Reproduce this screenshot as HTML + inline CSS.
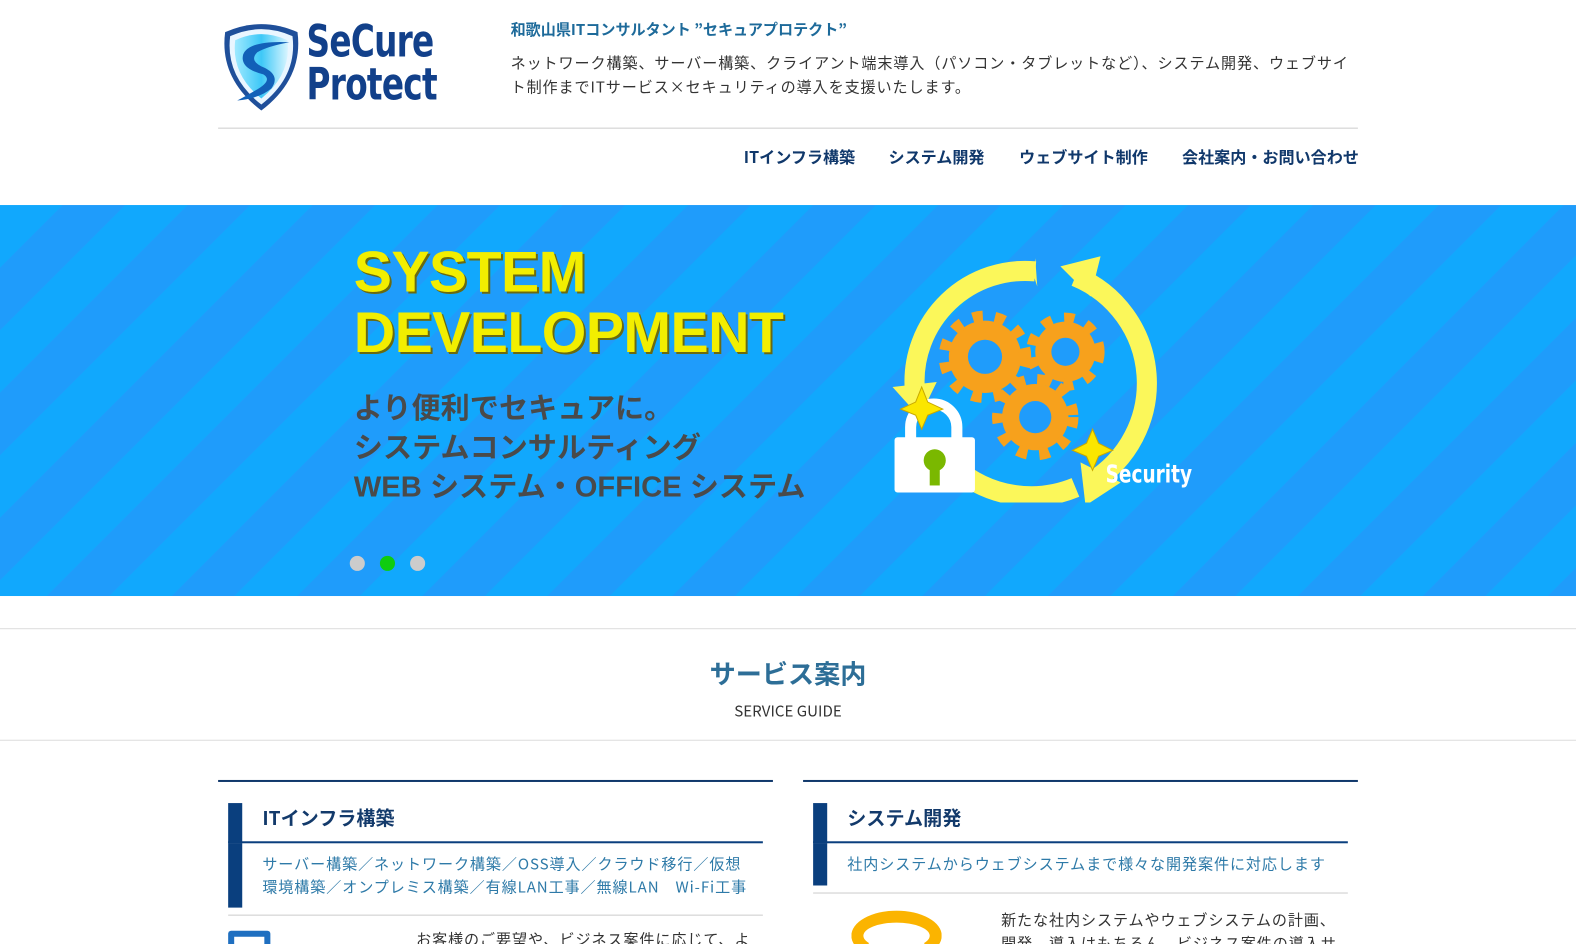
<!DOCTYPE html>
<html><head><meta charset="utf-8">
<style>
*{margin:0;padding:0;box-sizing:border-box}
html,body{overflow:hidden}
body{width:1576px;height:944px;background:#fff;font-family:"Noto Sans CJK JP","Liberation Sans",sans-serif;color:#333}
.wrap{position:relative;width:1568px;height:940px;overflow:hidden;transform:scale(1.0051);transform-origin:0 0}
.tag{position:absolute;left:508px;top:19px;font-size:15px;font-weight:bold;color:#1d6a9a}
.desc{position:absolute;left:508px;top:51px;width:845px;font-size:15px;line-height:24px;color:#333;letter-spacing:.9px}
.hr1{position:absolute;left:217px;top:127px;width:1134px;height:1px;background:#ccc}
.nav{position:absolute;top:143px;font-size:16px;font-weight:bold;color:#10386b}
.banner{position:absolute;left:0;top:204px;width:1568px;height:389px;background:repeating-linear-gradient(135deg,#11a8fd 0 44px,#1f9cfb 44px 88px);overflow:hidden}
.h1{position:absolute;left:352px;top:241px;font-size:57px;font-weight:900;line-height:60px;color:#f2ee00;text-shadow:2px 2px 0 #6a6a10;letter-spacing:-.6px;font-family:"Liberation Sans",sans-serif}
.sub{position:absolute;left:352px;top:388px;font-size:29px;font-weight:bold;line-height:39px;color:#4a4a4a;font-family:"Liberation Sans","Noto Sans CJK JP",sans-serif}
.dot{position:absolute;top:553px;width:15px;height:15px;border-radius:50%;background:#ccc}
.hr2{position:absolute;left:0;top:625px;width:1568px;height:1px;background:#ddd}
.hr3{position:absolute;left:0;top:736px;width:1568px;height:1px;background:#ddd}
.st{position:absolute;left:0;width:1568px;text-align:center}
.card{position:absolute;top:776px;width:552px;border-top:2px solid #10386b}
.ch{position:absolute;top:21px;left:10px;width:532px;height:40px;border-left:14px solid #0a3f7e;border-bottom:2px solid #0a3f7e;padding-left:20px;font-size:19px;font-weight:bold;color:#133a6b;line-height:30px}
.cb{position:absolute;left:10px;width:14px;background:#0a3f7e}
.ct{position:absolute;left:44px;font-size:15px;line-height:23px;color:#2e7aa8;letter-spacing:.9px;white-space:nowrap}
.cl{position:absolute;left:10px;width:532px;height:1px;background:#ccc}
</style></head><body><div class="wrap">
<svg style="position:absolute;left:218px;top:18px" width="84" height="94" viewBox="0 0 84 94">
<defs><linearGradient id="g" x1="0" x2="1"><stop offset="0" stop-color="#9fe9ff"/><stop offset=".5" stop-color="#3ec8f7"/><stop offset="1" stop-color="#d8f5ff"/></linearGradient></defs>
<path d="M6 14 Q42 -2 78 14 Q84 60 42 92 Q0 60 6 14Z" fill="#1f4f9a"/>
<path d="M11 18 Q42 4 73 18 Q78 58 42 86 Q6 58 11 18Z" fill="#eaf6ff"/>
<path d="M16 22 Q42 10 68 22 Q72 56 42 80 Q12 56 16 22Z" fill="url(#g)"/>
<path d="M70 24 Q30 22 24 36 Q20 50 44 56 Q54 62 36 72 Q26 78 18 82 Q40 80 52 70 Q62 56 42 48 Q30 42 38 34 Q48 28 70 24Z" fill="#1260b8"/>
</svg>
<div style="position:absolute;left:305px;top:20px;font-family:'DejaVu Sans',sans-serif;font-weight:bold;font-size:44px;line-height:43px;color:#12408a;transform:scaleX(.74);transform-origin:left;letter-spacing:-1px">SeCure<br>Protect</div>
<div class="tag">和歌山県ITコンサルタント ”セキュアプロテクト”</div>
<div class="desc">ネットワーク構築、サーバー構築、クライアント端末導入（パソコン・タブレットなど）、システム開発、ウェブサイト制作までITサービス×セキュリティの導入を支援いたします。</div>
<div class="hr1"></div>
<div class="nav" style="left:740px">ITインフラ構築</div>
<div class="nav" style="left:884px">システム開発</div>
<div class="nav" style="left:1014px">ウェブサイト制作</div>
<div class="nav" style="left:1176px">会社案内・お問い合わせ</div>
<div class="banner"></div>
<div class="h1">SYSTEM<br>DEVELOPMENT</div>
<div class="sub">より便利でセキュアに。<br>システムコンサルティング<br>WEB システム・OFFICE システム</div>
<div class="dot" style="left:348px"></div><div class="dot" style="left:378px;background:#0fcc0f"></div><div class="dot" style="left:408px"></div>
<svg style="position:absolute;left:880px;top:255px" width="320" height="245" viewBox="0 0 320 245">
<g fill="none" stroke="#fbf75a" stroke-width="20">
<path d="M150 15 A110 110 0 0 0 30 130"/>
<path d="M190 20 A115 115 0 0 1 205 225"/>
<path d="M70 210 A115 115 0 0 0 190 230"/>
</g>
<path d="M150 2 L152 30 L148 18Z M175 10 L215 0 L205 40Z" fill="#fbf75a"/>
<path d="M8 130 L52 125 L35 160Z" fill="#fbf75a"/>
<path d="M195 205 L235 225 L200 248Z" fill="#fbf75a"/>
<g fill="#f7a11c">
<circle cx="100" cy="100" r="36"/><circle cx="180" cy="95" r="30"/><circle cx="150" cy="160" r="33"/>
<g stroke="#f7a11c" stroke-width="12" stroke-dasharray="10 12"><circle cx="100" cy="100" r="40" fill="none"/><circle cx="180" cy="95" r="33" fill="none"/><circle cx="150" cy="160" r="37" fill="none"/></g>
</g>
<g fill="#1f9cfb"><circle cx="100" cy="100" r="17"/><circle cx="180" cy="95" r="14"/><circle cx="150" cy="160" r="16"/></g>
<path d="M26 190 V170 A23 23 0 0 1 72 170 V190" fill="none" stroke="#fff" stroke-width="11"/>
<rect x="10" y="180" width="80" height="55" rx="3" fill="#fff"/>
<circle cx="50" cy="203" r="11" fill="#7ab800"/><rect x="45" y="208" width="10" height="20" fill="#7ab800"/>
<path d="M37 130 L43 145 L58 152 L43 158 L37 172 L31 158 L16 152 L31 145Z" fill="#fbe600" stroke="#c8a800"/>
<path d="M207 172 L213 186 L227 193 L213 199 L207 213 L201 199 L187 193 L201 186Z" fill="#fbe600" stroke="#c8a800"/>
<text x="220" y="225" font-family="DejaVu Sans" font-weight="bold" font-size="25" fill="#fff" textLength="86" lengthAdjust="spacingAndGlyphs">Security</text>
</svg>
<div class="hr2"></div>
<div class="st" style="top:651px;font-size:26px;font-weight:bold;color:#2d6e97">サービス案内</div>
<div class="st" style="top:697px;font-size:15px;color:#333">SERVICE GUIDE</div>
<div class="hr3"></div>
<div class="card" style="left:217px">
 <div class="ch">ITインフラ構築</div>
 <div class="cb" style="top:61px;height:64px"></div>
 <div class="ct" style="top:70px">サーバー構築／ネットワーク構築／OSS導入／クラウド移行／仮想<br>環境構築／オンプレミス構築／有線LAN工事／無線LAN　Wi-Fi工事</div>
 <div class="cl" style="top:132px"></div>
 <div style="position:absolute;left:10px;top:148px;width:42px;height:20px;background:#1f6fc0;border-radius:3px"><div style="margin:6px 6px;height:8px;background:#fff"></div></div>
 <div style="position:absolute;left:197px;top:146px;font-size:15px;color:#333;letter-spacing:.9px;white-space:nowrap">お客様のご要望や、ビジネス案件に応じて、よ</div>
</div>
<div class="card" style="left:799px">
 <div class="ch">システム開発</div>
 <div class="cb" style="top:61px;height:42px"></div>
 <div class="ct" style="top:70px">社内システムからウェブシステムまで様々な開発案件に対応します</div>
 <div class="cl" style="top:110px"></div>
 <div style="position:absolute;left:48px;top:128px;width:90px;height:50px;border:12px solid #fbb400;border-radius:50%;border-bottom-color:transparent"></div>
 <div style="position:absolute;left:197px;top:126px;font-size:15px;line-height:23px;color:#333;letter-spacing:.9px;white-space:nowrap">新たな社内システムやウェブシステムの計画、<br>開発、導入はもちろん、ビジネス案件の導入サ</div>
</div>
</div></body></html>
